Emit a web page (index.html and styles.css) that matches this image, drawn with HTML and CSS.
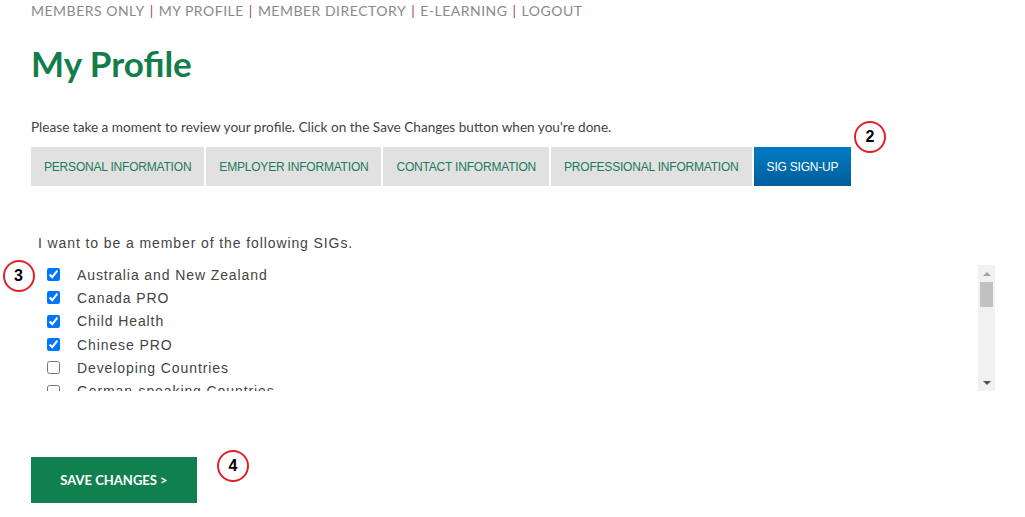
FILE: index.html
```html
<!doctype html>
<html lang="en">
	<head>
		<meta charset="utf-8" />
		<title>My Profile</title>
		<link rel="stylesheet" href="styles.css">
	</head>

	<body>
		<div id="page">
			<!-- Top nav -->
			<div class="top-nav">
				<span>Members Only</span><span class="sep">|</span><span>My Profile</span><span class="sep">|</span><span>Member Directory</span><span class="sep">|</span><span>E-Learning</span><span class="sep">|</span><span>Logout</span>
			</div>

			<h1 class="page-title">My Profile</h1>

			<p class="intro">Please take a moment to review your profile. Click on the Save Changes button when you're done.</p>

			<!-- Profile tabs -->
			<div class="tabs">
				<a class="tab">Personal Information</a>
				<a class="tab">Employer Information</a>
				<a class="tab">Contact Information</a>
				<a class="tab">Professional Information</a>
				<a class="tab active">SIG Sign-Up</a>
				<span class="marker marker-2">2</span>
			</div>

			<!-- SIG list -->
			<div class="sig-section">
				<p class="sig-label">I want to be a member of the following SIGs.</p>
				<div class="sig-box">
					<span class="marker marker-3">3</span>
					<ul class="sig-list">
						<li><input type="checkbox" checked><span>Australia and New Zealand</span></li>
						<li><input type="checkbox" checked><span>Canada PRO</span></li>
						<li><input type="checkbox" checked><span>Child Health</span></li>
						<li><input type="checkbox" checked><span>Chinese PRO</span></li>
						<li><input type="checkbox"><span>Developing Countries</span></li>
						<li><input type="checkbox"><span>German-speaking Countries</span></li>
						<li><input type="checkbox"><span>Health Preference Research</span></li>
					</ul>
					<div class="scrollbar">
						<div class="arrow up"></div>
						<div class="track"><div class="thumb"></div></div>
						<div class="arrow down"></div>
					</div>
				</div>
			</div>

			<div class="actions">
				<button class="save-btn">Save Changes &gt;</button>
				<span class="marker marker-4">4</span>
			</div>
		</div>
	</body>
</html>
```

FILE: styles.css
```css
body {
	margin: 0;
	background: #fff;
	font-family: "Lato", "Open Sans", sans-serif;
	color: #333;
}

#page {
	padding-left: 31px;
	width: 964px;
}

.top-nav {
	font-size: 14px;
	line-height: 22px;
	letter-spacing: 0.5px;
	text-transform: uppercase;
	color: #8a8a8a;
}

.top-nav .sep {
	color: #a0465a;
	margin: 0 5px;
}

.page-title {
	margin: 21px 0 0;
	font-size: 35px;
	line-height: 40px;
	font-weight: 700;
	color: #137d4c;
}

.intro {
	margin: 36px 0 0;
	font-size: 13.6px;
	line-height: 16px;
	color: #444;
}

.tabs {
	position: relative;
	display: flex;
	gap: 2px;
	margin-top: 12px;
}

.tab {
	display: flex;
	align-items: center;
	height: 39px;
	padding: 0 13px;
	background: #e1e1e1;
	color: #1d7a5a;
	font-family: "Liberation Sans", Arial, sans-serif;
	font-size: 12px;
	text-transform: uppercase;
	letter-spacing: -0.2px;
}

.tab.active {
	background: linear-gradient(#007bc4, #005e9b);
	color: #fff;
}

.marker {
	position: absolute;
	width: 28px;
	height: 28px;
	border: 2px solid #e2202a;
	border-radius: 50%;
	display: flex;
	align-items: center;
	justify-content: center;
	font-family: "Liberation Sans", Arial, sans-serif;
	font-weight: 700;
	font-size: 16px;
	color: #000;
	background: #fff;
}

.marker-2 {
	left: 823px;
	top: -26px;
}

.sig-section {
	margin-top: 49px;
	font-family: "Liberation Sans", Arial, sans-serif;
	letter-spacing: 0.9px;
	color: #444;
}

.sig-label {
	margin: 0 0 0 7px;
	font-size: 14px;
	line-height: 16px;
}

.sig-box {
	position: relative;
	display: flex;
	margin-top: 14px;
	height: 126px;
}

.marker-3 {
	left: -28px;
	top: -5px;
}

.sig-list {
	flex: 1;
	list-style: none;
	margin: -2px 0 0;
	padding: 0 0 0 12px;
	overflow: hidden;
}

.sig-list li {
	display: flex;
	align-items: center;
	height: 23.3px;
	font-size: 14px;
}

.sig-list input {
	margin: 0 17px 0 4px;
	width: 13px;
	height: 13px;
	accent-color: #0075ff;
}

.scrollbar {
	width: 17px;
	background: #f1f1f1;
	display: flex;
	flex-direction: column;
}

.arrow {
	height: 17px;
	display: flex;
	align-items: center;
	justify-content: center;
}

.arrow::before {
	content: "";
	border-left: 4px solid transparent;
	border-right: 4px solid transparent;
}

.arrow.up::before {
	border-bottom: 4px solid #a3a3a3;
}

.arrow.down::before {
	border-top: 4px solid #505050;
}

.track {
	flex: 1;
	padding: 0 2px;
}

.thumb {
	height: 25px;
	background: #c1c1c1;
}

.actions {
	position: relative;
	margin-top: 66px;
}

.save-btn {
	width: 166px;
	height: 46px;
	border: none;
	background: #10804f;
	color: #fff;
	font-family: "Lato", "Open Sans", sans-serif;
	font-weight: 700;
	font-size: 13px;
	text-transform: uppercase;
	cursor: pointer;
}

.marker-4 {
	left: 186px;
	top: -7px;
}
```
